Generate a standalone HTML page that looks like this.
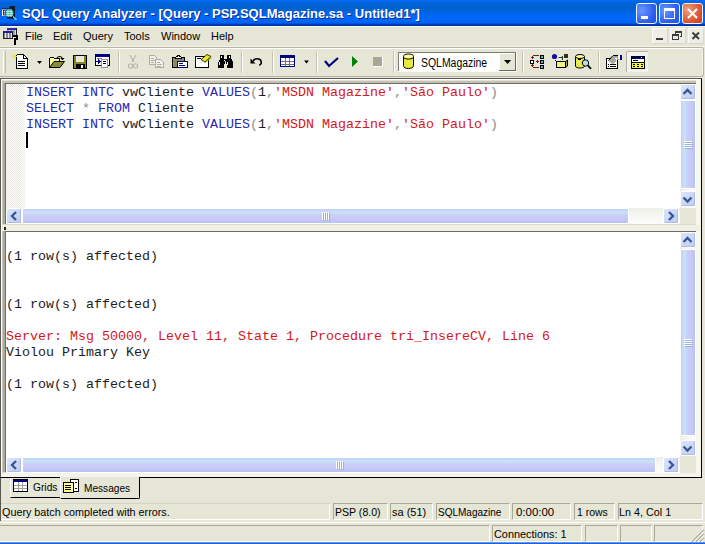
<!DOCTYPE html>
<html><head><meta charset="utf-8">
<style>
*{margin:0;padding:0;box-sizing:border-box}
html,body{width:705px;height:544px;overflow:hidden;background:#E6E6D6;font-family:"Liberation Sans",sans-serif}
.a{position:absolute}
#title{left:0;top:0;width:705px;height:26px;background:linear-gradient(#0A6CF6 0px,#0064E6 2px,#0062D0 5px,#0062CC 9px,#0066F0 13px,#0068F8 20px,#0062F0 23px,#0044C4 24px,#002E9C 26px)}
#ttext{left:22px;top:5px;font-size:13px;font-weight:bold;color:#fff;white-space:pre;text-shadow:1px 1px 0 #0A2C9A;line-height:18px}
.tb{top:3px;width:21px;height:21px;border:1px solid #F0F4FF;border-radius:3px;background:radial-gradient(circle at 25% 35%,#6E96FF 0,#4F7CF8 30%,#2E5EEE 65%,#2150E0 100%)}
.tb.c{background:radial-gradient(circle at 25% 30%,#F0A080 0,#E47450 35%,#D8502C 70%,#C44020 100%)}
#menu{left:0;top:26px;width:705px;height:21px;background:#E6E6D6;border-top:1px solid #F6F6FA}
.mi{top:30px;font-size:11px;color:#000;line-height:13px;white-space:pre}
#tool{left:0;top:47px;width:704px;height:30px;background:#E6E6D6;border:1px solid #B4B3A4;border-left:none;box-shadow:inset 0 1px 0 #fff,inset -1px 0 0 #F4F4EC;border-radius:0 3px 3px 0}
.sep{top:52px;width:2px;height:20px;border-left:1px solid #C5C2B2;border-right:1px solid #fff}
/* panes */
.pane{background:#fff}
.code{font-family:"Liberation Mono",monospace;font-size:13.333px;line-height:16px;white-space:pre;color:#1C1C1C}
.kw{color:#2828B0}.st{color:#D41818}.gr{color:#8C8C8C}
.sbv{width:16px}
.btn{width:15px;height:15px;border:1px solid #fff;box-shadow:inset -1px -1px 0 #B0BCE0;border-radius:2px;background:linear-gradient(135deg,#DCE6FD,#CCD8FA 50%,#BCCBF5)}
.thv{border:1px solid #fff;border-radius:2px;background:linear-gradient(90deg,#C6CEF8 0%,#C6E2F8 25%,#CCCEF8 45%,#C8C8F8 75%,#B4C4EE 100%)}
.thh{border:1px solid #fff;border-radius:2px;background:linear-gradient(180deg,#C6CEF8 0%,#C6E2F8 25%,#CCCEF8 45%,#C8C8F8 75%,#B4C4EE 100%)}
.sl{font-size:11px;line-height:13px;white-space:pre;color:#000}
.panel{border-top:1px solid #ACA899;border-left:1px solid #ACA899;border-right:1px solid #fff;border-bottom:1px solid #fff}
</style></head><body>

<!-- title bar -->
<div id="title" class="a"></div>
<svg class="a" style="left:0;top:3px" width="20" height="20" viewBox="0 3 20 20">
 <path d="M11 6h4v13h-3z" fill="#101830"/>
 <rect x="2" y="8" width="8" height="1.5" fill="#1A2A80"/>
 <rect x="2" y="9.5" width="5" height="6.5" fill="#F0F0FF"/>
 <path d="M3 10.5h2.5M3 12.8h2M3 15h2.5M3.5 10.5v4.5" stroke="#203060" stroke-width="0.9" fill="none"/>
 <circle cx="9.5" cy="13" r="4.3" fill="#3CC0B4" stroke="#0C3040" stroke-width="0.9"/>
 <path d="M6 11.5h7M5.6 13.5h7.8M6 15.5h7M8 9v8M11 9v8" stroke="#D8F8F0" stroke-width="0.6"/>
 <path d="M7 17.8h6" stroke="#101010" stroke-width="1.4"/>
 <path d="M13 16.5l3.5 3.5" stroke="#70E0F0" stroke-width="1.3"/>
 <circle cx="10.5" cy="7.5" r="1" fill="#000"/>
</svg>
<div id="ttext" class="a">SQL Query Analyzer - [Query - PSP.SQLMagazine.sa - Untitled1*]</div>
<div class="a tb" style="left:636px"><div class="a" style="left:4px;top:12px;width:7px;height:3px;background:#fff"></div></div>
<div class="a tb" style="left:659px"><div class="a" style="left:4px;top:4px;width:11px;height:11px;border:1px solid #fff;border-top-width:3px"></div></div>
<div class="a tb c" style="left:682px"><svg class="a" style="left:4px;top:4px" width="11" height="11"><path d="M1 1L10 10M10 1L1 10" stroke="#fff" stroke-width="2"/></svg></div>

<!-- menu bar -->
<div id="menu" class="a"></div>
<svg class="a" style="left:0;top:26px" width="22" height="22" viewBox="0 26 22 22" shape-rendering="crispEdges">
 <rect x="7" y="28" width="10" height="8" fill="#9A9AA8"/>
 <rect x="7" y="28" width="10" height="2" fill="#2A2AB0"/>
 <path d="M9.5 30v6M12.5 30v6M15.5 30v6" stroke="#E0E0E8"/>
 <path d="M16.5 28v8" stroke="#202020"/>
 <rect x="3" y="31" width="10" height="8" fill="#8A8A96"/>
 <rect x="3" y="31" width="10" height="1.5" fill="#2020A0"/>
 <path d="M5.5 33v5M8.5 33v5M11.5 33v5" stroke="#E8E8EE"/>
 <path d="M3 38.5h10M3.5 31v8M12.5 31v8" stroke="#202020"/>
 <path d="M13 35h5v5h-2v5h-2v-7h2v-1h-3z" fill="#000"/>
</svg>
<div class="a mi" style="left:25px">File</div>
<div class="a mi" style="left:53px">Edit</div>
<div class="a mi" style="left:83px">Query</div>
<div class="a mi" style="left:124px">Tools</div>
<div class="a mi" style="left:161px">Window</div>
<div class="a mi" style="left:211px">Help</div>
<!-- mdi buttons -->
<div class="a" style="left:652px;top:28px;width:16px;height:16px;background:#EFEEE6;border:1px solid;border-color:#FAFAF6 #D8D6CA #D8D6CA #FAFAF6"></div>
<div class="a" style="left:670px;top:28px;width:16px;height:16px;background:#EFEEE6;border:1px solid;border-color:#FAFAF6 #D8D6CA #D8D6CA #FAFAF6"></div>
<div class="a" style="left:688px;top:28px;width:16px;height:16px;background:#EFEEE6;border:1px solid;border-color:#FAFAF6 #D8D6CA #D8D6CA #FAFAF6"></div>
<svg class="a" style="left:650px;top:28px" width="55" height="16" viewBox="650 28 55 16" shape-rendering="crispEdges">
 <rect x="656" y="38" width="7" height="2" fill="#3C3C3C"/>
 <path d="M675.5 36.5v-5h6v5h-2" fill="none" stroke="#3C3C3C"/>
 <rect x="675" y="31" width="7" height="2" fill="#3C3C3C"/>
 <rect x="672.5" y="34.5" width="6" height="5" fill="#EFEEE6" stroke="#3C3C3C"/>
 <rect x="672" y="34" width="7" height="2" fill="#3C3C3C"/>
 <path d="M692.5 32.5L699 39M699 32.5L692.5 39" stroke="#3C3C3C" stroke-width="2" shape-rendering="auto"/>
</svg>

<!-- toolbar -->
<div class="a" style="left:0;top:46px;width:705px;height:1px;background:#F2F2EA"></div><div id="tool" class="a"></div>
<div class="a" style="left:3px;top:51px;width:3px;height:22px;border-left:1px solid #fff;border-right:1px solid #C5C2B2;background:#DDDACB"></div>
<svg class="a" style="left:0;top:0" width="705" height="544" viewBox="0 0 705 544" shape-rendering="crispEdges">
 <!-- new query -->
 <path d="M16.5 54.5h7l4 4v10h-11z" fill="#fff" stroke="#000"/>
 <path d="M23.5 54.5v4h4" fill="none" stroke="#000"/>
 <path d="M18 61.5h7M18 63.5h7M18 65.5h7" stroke="#000"/>
 <path d="M12 56.5h5M14.5 54v5M12.5 54.5l4 4M16.5 54.5l-4 4" stroke="#E8E060" stroke-width="1"/>
 <path d="M37 61h5l-2.5 3z" fill="#000" shape-rendering="auto"/>
 <!-- open folder -->
 <path d="M49.5 67.5v-9l1-1h3l1 1h5v3" fill="#FFFF99" stroke="#000"/>
 <path d="M50 59h4v3h-4z" fill="#FFFF99"/>
 <path d="M49.5 67.5l4.5-6h10.5l-4.5 6z" fill="#8C8C3A" stroke="#000" shape-rendering="auto"/>
 <path d="M57 58.2c1.2-2.2 4.2-2.2 5.2 0" fill="none" stroke="#000" stroke-width="1.1" shape-rendering="auto"/>
 <path d="M60.5 58h4l-2 2.2z" fill="#000" shape-rendering="auto"/>
 <!-- save -->
 <rect x="73.5" y="55.5" width="13" height="13" fill="#848431" stroke="#000"/>
 <rect x="76" y="56" width="8" height="6" fill="#E8E8D8"/>
 <rect x="76" y="64" width="9" height="4" fill="#000"/>
 <rect x="81" y="65" width="2" height="3" fill="#fff"/>
 <!-- load script -->
 <rect x="95.5" y="54.5" width="14" height="11" fill="#fff" stroke="#000"/>
 <rect x="96" y="54" width="14" height="3" fill="#000080"/>
 <path d="M97 58.5h5" stroke="#808080"/>
 <rect x="101.5" y="59.5" width="6" height="8" fill="#fff" stroke="#999"/>
 <path d="M103 61.5h3M103 63.5h3" stroke="#000"/>
 <path d="M95 61.5h4" stroke="#000080" stroke-width="1"/>
 <path d="M98 59.5l2 2-2 2" stroke="#000080" fill="none"/>
 <!-- separators -->
 <g stroke-width="1">
  <path d="M118.5 51v22M241.5 51v22M272.5 51v22M316.5 51v22M393.5 51v22M522.5 51v22M598.5 51v22" stroke="#C5C2B2"/>
  <path d="M119.5 51v22M242.5 51v22M273.5 51v22M317.5 51v22M394.5 51v22M523.5 51v22M599.5 51v22" stroke="#fff"/>
 </g>
 <!-- cut disabled -->
 <g fill="none" stroke="#B0AE9E" shape-rendering="auto">
  <path d="M130 55l4 7M136 55l-4 7"/>
  <circle cx="130.5" cy="66" r="2.2"/><circle cx="135.5" cy="66" r="2.2"/>
 </g>
 <!-- copy disabled -->
 <path d="M149.5 55.5h5l2 2v7h-7z" fill="#F2F1EA" stroke="#B0AE9E"/>
 <path d="M151 58.5h3M151 60.5h4M151 62.5h3" stroke="#B0AE9E"/>
 <path d="M155.5 59.5h5l3 3v5h-8z" fill="#F2F1EA" stroke="#B0AE9E"/>
 <path d="M157 62.5h3M157 64.5h5M157 66.5h4" stroke="#B0AE9E"/>
 <!-- paste -->
 <rect x="172.5" y="57.5" width="12" height="10" fill="#8C8C5C" stroke="#000"/>
 <path d="M175.5 58.5h6v-1l-1-1h-1v-1h-2v1h-1l-1 1z" fill="#F0F0E0" stroke="#000"/>
 <rect x="177.5" y="61.5" width="10" height="6" fill="#fff" stroke="#000080"/>
 <path d="M179 63.5h4M179 65.5h6" stroke="#000080"/>
 <!-- clear window -->
 <rect x="195.5" y="56.5" width="13" height="11" fill="#fff" stroke="#000"/>
 <path d="M197 58.5h4" stroke="#000080"/>
 <path d="M201 59.5l6-5 4 2-6 5.5z" fill="#E8E830" stroke="#202000" stroke-width="0.9" shape-rendering="auto"/>
 <path d="M201.5 60.5l4 1.5 6-5.5v1.5l-6 5z" fill="#A0A020" shape-rendering="auto"/>
 <!-- binoculars -->
 <path d="M220 55h4v4h3v-4h4v4l1 1v1l1 1v6h-6v-4h-1v-3h-1v3h-1v4h-6v-6l1-1v-1l1-1z" fill="#000"/>
 <path d="M221 56h1v2h-1zM229 56h1v2h-1zM219 62h1v3h-1zM227 62h1v3h-1zM224 60h1v1h-1z" fill="#fff"/>
 <!-- undo -->
 <path d="M253 61c2-3 7-3 8 0s-1 4-2 4" fill="none" stroke="#000" stroke-width="1.6" shape-rendering="auto"/>
 <path d="M250.5 58.5v5h5z" fill="#000" shape-rendering="auto"/>
 <!-- grid -->
 <rect x="280.5" y="55.5" width="14" height="11" fill="#fff" stroke="#000080"/>
 <rect x="281" y="55" width="14" height="3" fill="#000080"/>
 <path d="M281 61.5h13M281 64.5h13M285.5 58v8M289.5 58v8" stroke="#6C6C90"/>
 <path d="M304 60.5h5l-2.5 3z" fill="#000" shape-rendering="auto"/>
 <!-- parse check -->
 <path d="M325 61l4 5 9-8" fill="none" stroke="#000080" stroke-width="2.2" shape-rendering="auto"/>
 <!-- execute -->
 <path d="M352 56v11l6-5.5z" fill="#008000" shape-rendering="auto"/>
 <!-- stop -->
 <rect x="373" y="57" width="9" height="9" fill="#A8A696"/>
 <path d="M373 66.5h10M382.5 57v10" stroke="#fff"/>
 <!-- combo -->
 <rect x="398" y="52" width="119" height="20" fill="#fff"/>
 <path d="M398 52.5h118M398.5 52v19" stroke="#7C7B70"/>
 <path d="M516.5 52v20M398 71.5h119" stroke="#FAFAF6"/>
 <rect x="499" y="53" width="17" height="18" fill="#E6E6D6"/>
 <path d="M499 70.5h17M515.5 53v18" stroke="#6A695E"/>
 <path d="M499.5 53v17M499 53.5h16" stroke="#fff"/>
 <path d="M504 60h7.2l-3.6 4z" fill="#000" shape-rendering="auto"/>
 <!-- db cylinder -->
 <g shape-rendering="auto">
 <path d="M403.5 56.5v9c0 2 2 3 5 3s5-1 5-3v-9" fill="#E8E840" stroke="#000"/>
 <ellipse cx="408.5" cy="56.5" rx="5" ry="2.5" fill="#FFFFA0" stroke="#000"/>
 </g>
 <!-- exec plan -->
 <rect x="540.5" y="55.5" width="3" height="3" fill="#40B8A8" stroke="#000010"/>
 <rect x="540.5" y="60.5" width="3" height="3" fill="#40B8A8" stroke="#000010"/>
 <rect x="540.5" y="65.5" width="3" height="3" fill="#40B8A8" stroke="#000010"/>
 <rect x="530.5" y="60.5" width="3" height="3" fill="#fff" stroke="#000010"/>
 <path d="M533 55.5h6M533 67.5h6M536 61.5h3" stroke="#6A2014"/><path d="M531 57.5h3M532.5 56v3M536 61.5h3M537.5 60v3M531 65.5h3M532.5 64v3" stroke="#6A2014"/>
 <!-- objects -->
 <circle cx="554.5" cy="56.5" r="2.6" fill="#1010A0" shape-rendering="auto"/>
 <rect x="564" y="54" width="4" height="4" fill="#3A2A18"/>
 <path d="M558 57.5h4M562.5 55.5v4" stroke="#1A3A1A"/>
 <path d="M559.5 56l-1.5 1.5 1.5 1.5" stroke="#FFFFFF" fill="none" shape-rendering="auto"/>
 <path d="M555 60l1.5 1.5M566.5 60.5v1" stroke="#000"/>
 <rect x="556.5" y="61.5" width="9" height="6" fill="#F0F080" stroke="#000"/>
 <path d="M565.5 61.5l2-1.5v6l-2 1.5z" fill="#A0A040" stroke="#000" shape-rendering="auto"/>
 <!-- search db -->
 <g shape-rendering="auto">
 <path d="M575.5 56.5v9.5c0 1.2 1.8 2 4.5 2s4.5-.8 4.5-2v-9.5" fill="#E8E850" stroke="#000"/>
 <ellipse cx="580" cy="56.5" rx="4.5" ry="2" fill="#FFFFB0" stroke="#000"/>
 <path d="M578 59.5h3" stroke="#000"/>
 <circle cx="585.5" cy="63" r="3.2" fill="#B8E0E8" stroke="#000"/>
 <path d="M587.8 65.3l3.2 3.5" stroke="#000" stroke-width="2"/>
 </g>
 <!-- properties -->
 <rect x="606.5" y="58.5" width="11" height="10" fill="#fff" stroke="#000"/>
 <path d="M608 64.5h1M610 64.5h6M608 66.5h1M610 66.5h6" stroke="#000"/>
 <path d="M608.5 61l4.5-5h6v4h-2l-4 4.5z" fill="#A8A8A0" shape-rendering="auto"/>
 <path d="M613 55.5h5M612.5 56l-4 4.5" stroke="#000" shape-rendering="auto"/>
 <path d="M614 58h3v2" fill="#F0F0E0"/>
 <rect x="620" y="55" width="2" height="5" fill="#000080"/>
 <rect x="618" y="56" width="2" height="3" fill="#fff"/>
 <!-- pressed button -->
 <rect x="627" y="52" width="21" height="20" fill="#F2F2EA"/>
 <path d="M627 51.5h21M626.5 52v20" stroke="#B4B2A6"/>
 <!-- results pane icon -->
 <rect x="631.5" y="56.5" width="13" height="12" fill="#F0F040" stroke="#000"/>
 <rect x="632" y="57" width="12" height="2" fill="#000070"/>
 <rect x="641" y="57" width="1" height="1" fill="#fff"/>
 <rect x="632" y="59" width="12" height="3" fill="#fff"/>
 <path d="M633 60.5h5M632 62.5h12" stroke="#000"/>
 <path d="M633 64.5h2M637 64.5h2M641 64.5h2M633 66.5h2M637 66.5h2M641 66.5h2" stroke="#000"/>
</svg>


<div class="a" style="left:421px;top:56px;font-size:12px;line-height:14px;white-space:pre;color:#000;transform:scaleX(0.87);transform-origin:0 0">SQLMagazine</div>
<!-- MDI frame -->
<div class="a" style="left:0;top:78px;width:702px;height:400px;background:#F6F5EE;border-left:1px solid #5A5A52;border-top:1px solid #5A5A52;border-right:1px solid #000;border-bottom:1px solid #000"></div>
<div class="a" style="left:1px;top:79px;width:700px;height:1px;background:#fff"></div>
<div class="a" style="left:1px;top:79px;width:1px;height:398px;background:#fff"></div>

<!-- editor pane -->
<div class="a" style="left:2px;top:80px;width:694px;height:145px;border-top:1px solid #E2E0D4;border-left:1px solid #C8C6BA;background:#C4C2B4"></div><div class="a" style="left:3px;top:83px;width:2px;height:142px;background:#ACABA0"></div>
<div class="a" style="left:5px;top:83px;width:691px;height:142px;background:#6E6D62"></div>
<div class="a" style="left:6px;top:84px;width:690px;height:140px;background:#E6E6D6"></div>
<div class="a" style="left:6px;top:84px;width:674px;height:124px;background:#fff"></div>
<div class="a" style="left:6px;top:84px;width:17px;height:124px;background:repeating-conic-gradient(#FFFFFF 0 25%,#E6E6DE 0 50%) 0 0/2px 2px"></div><div class="a" style="left:23px;top:84px;width:2px;height:124px;background:#F6F6F2"></div>
<div class="a code" style="left:26px;top:85px"><span class="kw">INSERT INTC</span> vwCliente <span class="kw">VALUES</span><span class="gr">(</span>1<span class="gr">,</span><span class="st">'MSDN Magazine'</span><span class="gr">,</span><span class="st">'São Paulo'</span><span class="gr">)</span>
<span class="kw">SELECT</span> <span class="gr">*</span> <span class="kw">FROM</span> Cliente
<span class="kw">INSERT INTC</span> vwCliente <span class="kw">VALUES</span><span class="gr">(</span>1<span class="gr">,</span><span class="st">'MSDN Magazine'</span><span class="gr">,</span><span class="st">'São Paulo'</span><span class="gr">)</span></div>
<div class="a" style="left:26px;top:132px;width:2px;height:16px;background:#000"></div>
<!-- editor v scroll -->
<div class="a" style="left:680px;top:84px;width:16px;height:124px;background:linear-gradient(90deg,#F0F0EA,#FCFCFA)"></div>
<div class="a btn" style="left:680px;top:84px;width:16px;height:16px"></div>
<div class="a thv" style="left:680px;top:100px;width:16px;height:89px"></div>
<div class="a btn" style="left:680px;top:191px;width:16px;height:16px"></div>
<!-- editor h scroll -->
<div class="a" style="left:6px;top:208px;width:674px;height:16px;background:linear-gradient(#F0F0EA,#FCFCFA)"></div>
<div class="a btn" style="left:6px;top:208px;width:16px;height:16px"></div>
<div class="a thh" style="left:22px;top:208px;width:607px;height:16px"></div>
<div class="a btn" style="left:663px;top:208px;width:16px;height:16px"></div>

<!-- splitter -->
<div class="a" style="left:2px;top:225px;width:698px;height:6px;background:#F0EFE4"></div>
<div class="a" style="left:2px;top:224px;width:694px;height:1px;background:#DCDAD0"></div>
<div class="a" style="left:4px;top:227px;width:2px;height:3px;background:#222"></div>

<!-- results pane -->
<div class="a" style="left:2px;top:231px;width:694px;height:242px;background:#ACABA0;border-left:1px solid #C8C6BA"></div>
<div class="a" style="left:5px;top:231px;width:691px;height:242px;background:#6E6D62"></div>
<div class="a" style="left:6px;top:232px;width:690px;height:240px;background:#E6E6D6"></div>
<div class="a" style="left:6px;top:232px;width:674px;height:225px;background:#fff"></div>
<div class="a" style="left:2px;top:472px;width:698px;height:5px;background:#F4F3EC"></div>
<div class="a" style="left:2px;top:472px;width:694px;height:1px;background:#DCDAD0"></div>
<div class="a code" style="left:6px;top:233px">
(1 row(s) affected)


(1 row(s) affected)

<span class="st">Server: Msg 50000, Level 11, State 1, Procedure tri_InsereCV, Line 6</span>
Violou Primary Key

(1 row(s) affected)</div>
<!-- results v scroll -->
<div class="a" style="left:680px;top:232px;width:16px;height:225px;background:linear-gradient(90deg,#F0F0EA,#FCFCFA)"></div>
<div class="a btn" style="left:680px;top:232px;width:16px;height:16px"></div>
<div class="a thv" style="left:680px;top:249px;width:16px;height:187px"></div>
<div class="a btn" style="left:680px;top:440px;width:16px;height:16px"></div><div class="a" style="left:680px;top:456px;width:16px;height:17px;background:#E6E6D6"></div>
<!-- results h scroll -->
<div class="a" style="left:6px;top:457px;width:674px;height:16px;background:linear-gradient(#F0F0EA,#FCFCFA)"></div>
<div class="a btn" style="left:6px;top:457px;width:16px;height:16px"></div>
<div class="a thh" style="left:22px;top:457px;width:634px;height:16px"></div>
<div class="a btn" style="left:663px;top:457px;width:16px;height:16px"></div>

<svg class="a" style="left:0;top:0" width="705" height="544" viewBox="0 0 705 544">
<g fill="none" stroke="#3A5490" stroke-width="2.3"><path d="M683.5 94L687.5 90L691.5 94"/><path d="M683.5 197.5L687.5 201.5L691.5 197.5"/><path d="M16 212L12 216L16 220"/><path d="M669 212L673 216L669 220"/><path d="M683.5 242L687.5 238L691.5 242"/><path d="M683.5 446.5L687.5 450.5L691.5 446.5"/><path d="M16 461L12 465L16 469"/><path d="M669 461L673 465L669 469"/></g>
<g shape-rendering="crispEdges"><path d="M684 141.5h8" stroke="#fff"/><path d="M685 142.5h8" stroke="#9EAEE6"/><path d="M684 143.5h8" stroke="#fff"/><path d="M685 144.5h8" stroke="#9EAEE6"/><path d="M684 145.5h8" stroke="#fff"/><path d="M685 146.5h8" stroke="#9EAEE6"/><path d="M684 147.5h8" stroke="#fff"/><path d="M685 148.5h8" stroke="#9EAEE6"/><path d="M684 339.5h8" stroke="#fff"/><path d="M685 340.5h8" stroke="#9EAEE6"/><path d="M684 341.5h8" stroke="#fff"/><path d="M685 342.5h8" stroke="#9EAEE6"/><path d="M684 343.5h8" stroke="#fff"/><path d="M685 344.5h8" stroke="#9EAEE6"/><path d="M684 345.5h8" stroke="#fff"/><path d="M685 346.5h8" stroke="#9EAEE6"/><path d="M322.5 212v8" stroke="#fff"/><path d="M323.5 213v8" stroke="#9EAEE6"/><path d="M324.5 212v8" stroke="#fff"/><path d="M325.5 213v8" stroke="#9EAEE6"/><path d="M326.5 212v8" stroke="#fff"/><path d="M327.5 213v8" stroke="#9EAEE6"/><path d="M328.5 212v8" stroke="#fff"/><path d="M329.5 213v8" stroke="#9EAEE6"/><path d="M336.5 461v8" stroke="#fff"/><path d="M337.5 462v8" stroke="#9EAEE6"/><path d="M338.5 461v8" stroke="#fff"/><path d="M339.5 462v8" stroke="#9EAEE6"/><path d="M340.5 461v8" stroke="#fff"/><path d="M341.5 462v8" stroke="#9EAEE6"/><path d="M342.5 461v8" stroke="#fff"/><path d="M343.5 462v8" stroke="#9EAEE6"/></g>
</svg>
<!-- tabs -->
<div class="a" style="left:0;top:478px;width:705px;height:22px;background:#E6E6D6"></div>
<div class="a" style="left:0;top:478px;width:1px;height:22px;background:#5A5A52"></div>
<div class="a" style="left:0;top:477px;width:702px;height:1px;background:#000"></div>
<div class="a" style="left:10px;top:478px;width:50px;height:20px;border-bottom:1px solid #000;border-left:1px solid #fff;background:#E6E6D6"></div>
<div class="a sl" style="left:33px;top:481px;transform:scaleX(0.93);transform-origin:0 0">Grids</div>
<div class="a" style="left:60px;top:477px;width:80px;height:22px;background:#E6E6D6;border-right:1px solid #000;border-bottom:1px solid #000;border-left:1px solid #fff;border-radius:0 0 2px 0"></div>
<div class="a sl" style="left:84px;top:482px;transform:scaleX(0.92);transform-origin:0 0">Messages</div>
<svg class="a" style="left:0;top:470px" width="150" height="30" viewBox="0 470 150 30" shape-rendering="crispEdges">
 <rect x="13.5" y="479.5" width="14" height="12" fill="#fff" stroke="#000"/>
 <rect x="14" y="480" width="13" height="2" fill="#000080"/>
 <path d="M14 485.5h13M14 488.5h13M18.5 482v9M22.5 482v9" stroke="#A0A0A0"/>
 <rect x="70.5" y="479.5" width="8" height="12" fill="#fff" stroke="#000"/>
 <path d="M75 482.5h2M75 488.5h2" stroke="#000"/>
 <rect x="63.5" y="482.5" width="10" height="10" fill="#FFFF90" stroke="#000"/>
 <path d="M65 485.5h6M65 487.5h6M65 489.5h6" stroke="#000"/>
</svg>

<!-- status bar -->
<div class="a sl" style="left:2px;top:506px;transform:scaleX(0.98);transform-origin:0 0">Query batch completed with errors.</div>
<div class="a panel" style="left:0;top:503px;width:330px;height:17px;border-top:none;border-left:none"></div>
<div class="a panel" style="left:333px;top:503px;width:55px;height:17px"></div>
<div class="a sl" style="left:335px;top:506px;transform:scaleX(0.96);transform-origin:0 0">PSP (8.0)</div>
<div class="a panel" style="left:390px;top:503px;width:43px;height:17px"></div>
<div class="a sl" style="left:392px;top:506px">sa (51)</div>
<div class="a panel" style="left:436px;top:503px;width:74px;height:17px"></div>
<div class="a sl" style="left:438px;top:506px;transform:scaleX(0.91);transform-origin:0 0">SQLMagazine</div>
<div class="a panel" style="left:512px;top:503px;width:59px;height:17px"></div>
<div class="a sl" style="left:516px;top:506px;transform:scaleX(1.04);transform-origin:0 0">0:00:00</div>
<div class="a panel" style="left:574px;top:503px;width:41px;height:17px"></div>
<div class="a sl" style="left:577px;top:506px;transform:scaleX(0.95);transform-origin:0 0">1 rows</div>
<div class="a panel" style="left:618px;top:503px;width:85px;height:17px"></div>
<div class="a sl" style="left:619px;top:506px;transform:scaleX(0.98);transform-origin:0 0">Ln 4, Col 1</div>

<div class="a" style="left:0;top:522px;width:705px;height:1px;background:#fff"></div>
<div class="a panel" style="left:0;top:525px;width:490px;height:17px;border-left:none"></div>
<div class="a panel" style="left:492px;top:525px;width:90px;height:17px"></div>
<div class="a sl" style="left:494px;top:528px;transform:scaleX(0.99);transform-origin:0 0">Connections: 1</div>
<div class="a panel" style="left:585px;top:525px;width:33px;height:17px"></div>
<div class="a panel" style="left:620px;top:525px;width:32px;height:17px"></div>
<div class="a panel" style="left:654px;top:525px;width:49px;height:17px"></div>
<div class="a" style="left:0;top:542px;width:705px;height:2px;background:linear-gradient(#5A9CF4 0,#5A9CF4 1px,#1E5CE0 1px)"></div>
<div class="a" style="left:0;top:478px;width:1px;height:43px;background:#5A5A52"></div>
<div class="a" style="left:1px;top:503px;width:329px;height:1px;background:#D6D3C4"></div>
<svg class="a" style="left:690px;top:528px" width="15" height="14" viewBox="690 528 15 14">
 <path d="M692 542L704 530M696 542L704 534M700 542L704 538" stroke="#A8A596" stroke-width="1.4"/>
 <path d="M693 542L704 531M697 542L704 535M701 542L704 539" stroke="#fff" stroke-width="0.8"/>
</svg>

</body></html>
